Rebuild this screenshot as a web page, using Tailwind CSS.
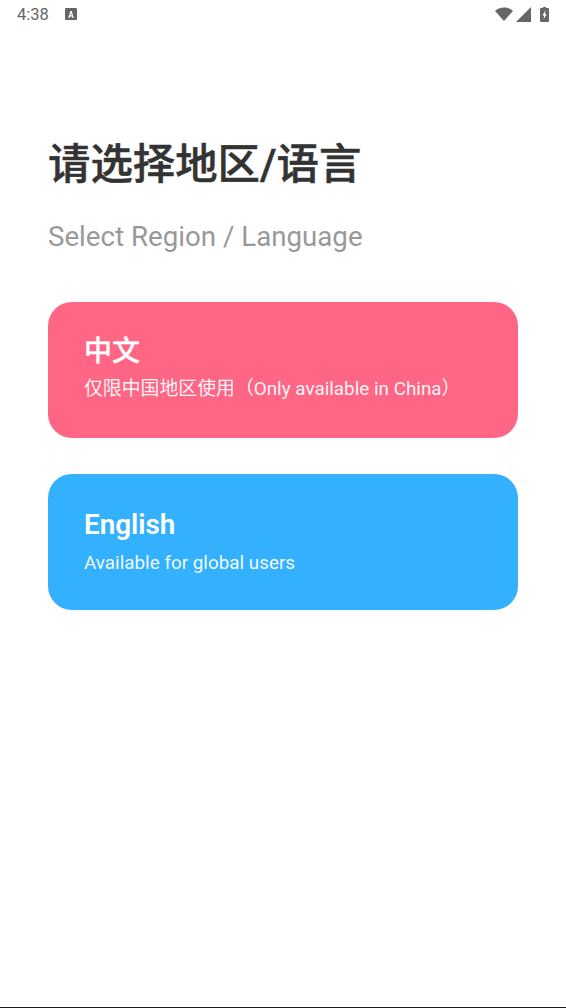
<!DOCTYPE html>
<html lang="zh">
<head>
    <meta charset="UTF-8" />
    <title>Select Region</title>
    <script src="https://cdn.jsdelivr.net/npm/@tailwindcss/browser@4"></script>
</head>
<body class="bg-white font-['Roboto','Noto_Sans_CJK_SC',sans-serif]">
    <div class="h-[1008px] flex flex-col overflow-hidden">
        <!-- status bar -->
        <div class="h-[28px] shrink-0 flex items-center justify-between pl-[17px] pr-[17px] text-[#666666]">
            <div class="flex items-center gap-[16px]">
                <span class="mt-[2px] text-[16.5px] leading-none">4:38</span>
                <svg width="12" height="12" viewBox="0 0 12 12"><rect width="12" height="12" rx="1" fill="#666666"/><path d="M3.300 10 5.300 3h1.400l2 7H7.400l-.4-1.500H5L4.600 10zM5.300 7.300h1.400L6 4.800z" fill="#fff"/></svg>
            </div>
            <div class="flex items-center gap-[3px]">
                <svg width="18" height="14" viewBox="0 0 18 14"><path d="M0 4C2.300 1.800 5.400.5 9 .5s6.700 1.300 9 3.500L9 14z" fill="#666666"/></svg>
                <svg width="15" height="15" viewBox="0 0 15 15"><path d="M15 0v15H0z" fill="#666666"/></svg>
                <svg width="9" height="15" viewBox="0 0 9 15" class="ml-[6px]"><path d="M3 0h3v1h2a1 1 0 0 1 1 1v12a1 1 0 0 1-1 1H1a1 1 0 0 1-1-1V2a1 1 0 0 1 1-1h2z" fill="#666666"/><path d="M5.500 3 2.500 8.500h1.700L3.500 12.500 6.700 7H5z" fill="#fff"/></svg>
            </div>
        </div>

        <div class="flex-1 px-[48px]">
            <h1 class="mt-[109px] text-[42.4px] leading-[56px] font-medium text-[#333333] [-webkit-text-stroke:0.5px_#333333]">请选择地区/语言</h1>
            <p class="mt-[26px] text-[27.7px] leading-[36px] text-[#999999]">Select Region / Language</p>

            <div class="mt-[47px] flex flex-col gap-[36px] w-[470px]">
                <button class="h-[136px] rounded-[24px] bg-[#ff6685] px-[36px] pt-[32px] flex flex-col items-start text-white text-left">
                    <span class="text-[28px] leading-[36px] font-medium [-webkit-text-stroke:0.3px_#ffffff]">中文</span>
                    <span class="mt-[5px] text-[18.86px] leading-[28px] text-white/95">仅限中国地区使用（Only available in China）</span>
                </button>
                <button class="h-[136px] rounded-[24px] bg-[#33b1ff] px-[36px] pt-[33px] flex flex-col items-start text-white text-left">
                    <span class="text-[27.8px] leading-[36px] font-semibold">English</span>
                    <span class="mt-[6px] text-[18.86px] leading-[28px] text-white/95">Available for global users</span>
                </button>
            </div>
        </div>

        <!-- nav bar edge -->
        <div class="h-px shrink-0 bg-[#1a1a1a]"></div>
    </div>
</body>
</html>
